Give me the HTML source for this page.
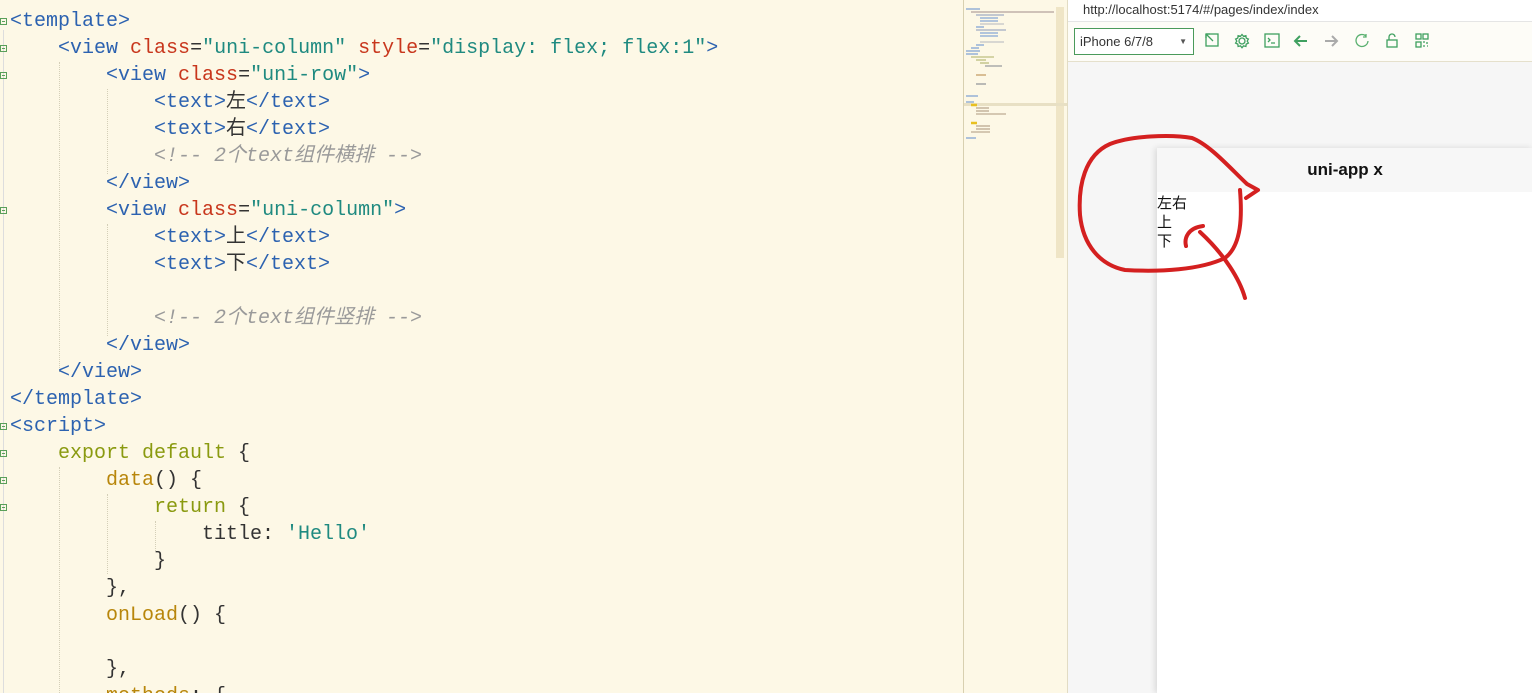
<!DOCTYPE html>
<html><head><meta charset="utf-8"><style>
*{margin:0;padding:0;box-sizing:border-box}
html,body{width:1532px;height:693px;overflow:hidden}
body{position:relative;background:#fdf8e6;font-family:"Liberation Sans","Noto Sans CJK SC",sans-serif}
#code{position:absolute;left:0;top:0;width:963px;height:693px;background:#fdf8e6}
.ln{position:absolute;left:10px;height:27px;line-height:27px;font-family:"Liberation Mono","Noto Sans CJK SC",monospace;font-size:20px;white-space:pre;color:#333}
.t{color:#2c62b0}.a{color:#c8361c}.s{color:#1f8a80}.c{color:#9a9a9a;font-style:italic}.k{color:#8a9a10}.f{color:#b8860b}
.fold{position:absolute;left:0;width:7px;height:7px;border:1px solid #5aa05a;font-size:0}
.fold:after{content:"";position:absolute;left:1px;top:2px;width:3px;height:1px;background:#5aa05a}
.guide{position:absolute;border-left:1px dotted #d4cfb8;width:0}
#mini{position:absolute;left:963px;top:0;width:104px;height:693px;background:#fdf8e6;border-left:1px solid #d8d0b0}
#right{position:absolute;left:1067px;top:0;width:465px;height:693px;background:#f6f6f6;border-left:1px solid #e2dcc4}
</style></head><body>
<div id="code">
<div class="guide" style="left:59px;top:62px;height:310px"></div>
<div class="guide" style="left:107px;top:89px;height:85px"></div>
<div class="guide" style="left:107px;top:224px;height:112px"></div>
<div class="guide" style="left:59px;top:467px;height:226px"></div>
<div class="guide" style="left:107px;top:494px;height:80px"></div>
<div class="guide" style="left:155px;top:521px;height:30px"></div>
<div style="position:absolute;left:3px;top:30px;height:663px;border-left:1px solid #ddd"></div>
<div class="fold" style="top:18px"></div><div class="fold" style="top:45px"></div><div class="fold" style="top:72px"></div><div class="fold" style="top:207px"></div><div class="fold" style="top:423px"></div><div class="fold" style="top:450px"></div><div class="fold" style="top:477px"></div><div class="fold" style="top:504px"></div>
<div class="ln" style="top:8px"><span class="t">&lt;template&gt;</span></div>
<div class="ln" style="top:35px">    <span class="t">&lt;view</span> <span class="a">class</span>=<span class="s">"uni-column"</span> <span class="a">style</span>=<span class="s">"display: flex; flex:1"</span><span class="t">&gt;</span></div>
<div class="ln" style="top:62px">        <span class="t">&lt;view</span> <span class="a">class</span>=<span class="s">"uni-row"</span><span class="t">&gt;</span></div>
<div class="ln" style="top:89px">            <span class="t">&lt;text&gt;</span>左<span class="t">&lt;/text&gt;</span></div>
<div class="ln" style="top:116px">            <span class="t">&lt;text&gt;</span>右<span class="t">&lt;/text&gt;</span></div>
<div class="ln" style="top:143px">            <span class="c">&lt;!-- 2个text组件横排 --&gt;</span></div>
<div class="ln" style="top:170px">        <span class="t">&lt;/view&gt;</span></div>
<div class="ln" style="top:197px">        <span class="t">&lt;view</span> <span class="a">class</span>=<span class="s">"uni-column"</span><span class="t">&gt;</span></div>
<div class="ln" style="top:224px">            <span class="t">&lt;text&gt;</span>上<span class="t">&lt;/text&gt;</span></div>
<div class="ln" style="top:251px">            <span class="t">&lt;text&gt;</span>下<span class="t">&lt;/text&gt;</span></div>
<div class="ln" style="top:305px">            <span class="c">&lt;!-- 2个text组件竖排 --&gt;</span></div>
<div class="ln" style="top:332px">        <span class="t">&lt;/view&gt;</span></div>
<div class="ln" style="top:359px">    <span class="t">&lt;/view&gt;</span></div>
<div class="ln" style="top:386px"><span class="t">&lt;/template&gt;</span></div>
<div class="ln" style="top:413px"><span class="t">&lt;script&gt;</span></div>
<div class="ln" style="top:440px">    <span class="k">export default</span> {</div>
<div class="ln" style="top:467px">        <span class="f">data</span>() {</div>
<div class="ln" style="top:494px">            <span class="k">return</span> {</div>
<div class="ln" style="top:521px">                title: <span class="s">'Hello'</span></div>
<div class="ln" style="top:548px">            }</div>
<div class="ln" style="top:575px">        },</div>
<div class="ln" style="top:602px">        <span class="f">onLoad</span>() {</div>
<div class="ln" style="top:656px">        },</div>
<div class="ln" style="top:683px">        <span class="f">methods</span>: {</div>
</div>
<div id="mini">
<div style="position:absolute;left:92px;top:7px;width:8px;height:251px;background:#efe5c6"></div>
<div style="position:absolute;left:0;top:103px;width:104px;height:3px;background:#e8e0c4"></div>
<svg width="104" height="150" style="position:absolute;left:0;top:0">
<g stroke-width="1.6">
<line x1="2" y1="9" x2="16" y2="9" stroke="#9ab4d8"/><line x1="7" y1="12" x2="90" y2="12" stroke="#c0b0a8"/><line x1="12" y1="15" x2="40" y2="15" stroke="#b0b8c8"/><line x1="16" y1="18" x2="34" y2="18" stroke="#9ab4d8"/><line x1="16" y1="21" x2="34" y2="21" stroke="#9ab4d8"/><line x1="16" y1="24" x2="40" y2="24" stroke="#ccc"/><line x1="12" y1="27" x2="20" y2="27" stroke="#9ab4d8"/><line x1="12" y1="30" x2="42" y2="30" stroke="#b0b8c8"/><line x1="16" y1="33" x2="34" y2="33" stroke="#9ab4d8"/><line x1="16" y1="36" x2="34" y2="36" stroke="#9ab4d8"/><line x1="16" y1="42" x2="40" y2="42" stroke="#ccc"/><line x1="12" y1="45" x2="20" y2="45" stroke="#9ab4d8"/><line x1="7" y1="48" x2="15" y2="48" stroke="#9ab4d8"/><line x1="2" y1="51" x2="16" y2="51" stroke="#9ab4d8"/><line x1="2" y1="54" x2="14" y2="54" stroke="#9ab4d8"/><line x1="7" y1="57" x2="30" y2="57" stroke="#c8c890"/><line x1="12" y1="60" x2="22" y2="60" stroke="#c8c890"/><line x1="16" y1="63" x2="25" y2="63" stroke="#c8c890"/><line x1="21" y1="66" x2="38" y2="66" stroke="#aaa"/><line x1="12" y1="75" x2="22" y2="75" stroke="#d0b080"/><line x1="12" y1="84" x2="22" y2="84" stroke="#aaa"/><line x1="2" y1="96" x2="14" y2="96" stroke="#9ab4d8"/><line x1="2" y1="102" x2="10" y2="102" stroke="#9ab4d8"/><line x1="7" y1="105" x2="13" y2="105" stroke="#e8c020" stroke-width="2.5"/><line x1="12" y1="108" x2="25" y2="108" stroke="#c8b8a0"/><line x1="12" y1="111" x2="25" y2="111" stroke="#c8b8a0"/><line x1="12" y1="114" x2="42" y2="114" stroke="#c8b8a0"/><line x1="7" y1="123" x2="13" y2="123" stroke="#e8c020" stroke-width="2.5"/><line x1="12" y1="126" x2="26" y2="126" stroke="#c8b8a0"/><line x1="12" y1="129" x2="26" y2="129" stroke="#c8b8a0"/><line x1="7" y1="132" x2="26" y2="132" stroke="#c8b8a0"/><line x1="2" y1="138" x2="12" y2="138" stroke="#9ab4d8"/>
</g></svg>
</div>
<div id="right">
<div style="position:absolute;left:0;top:0;width:465px;height:22px;background:#fff;border-bottom:1px solid #e5e5e5;font-size:13px;color:#333;line-height:20px;padding-left:15px">http://localhost:5174/#/pages/index/index</div>
<div style="position:absolute;left:0;top:22px;width:465px;height:40px;background:#fdfcf7;border-bottom:1px solid #e5e0cc"></div>
<div style="position:absolute;left:6px;top:28px;width:120px;height:27px;border:1px solid #4a9a5a;background:#fff;font-size:13px;color:#333;line-height:25px;padding-left:5px">iPhone 6/7/8<span style="position:absolute;right:6px;top:0;font-size:8px;color:#555">▼</span></div>
<svg width="260" height="20" style="position:absolute;left:134px;top:31px" fill="none" stroke="#3fa060" stroke-width="1.3">
<rect x="4" y="3" width="12" height="12"/><path d="M4 3 L11 10 M4 3 h4 M4 3 v4"/>
<circle cx="40" cy="10" r="3"/><path d="M40 3.5 l1.5 1.8 2.4-.6 .3 2.4 2.2 1 -1.2 2 1.2 2 -2.2 1 -.3 2.4 -2.4-.6 -1.5 1.8 -1.5-1.8 -2.4 .6 -.3-2.4 -2.2-1 1.2-2 -1.2-2 2.2-1 .3-2.4 2.4 .6z"/>
<rect x="63" y="3" width="14" height="13"/><path d="M66 7 l2 2 -2 2 M69 12 h4"/>
<path d="M93 10 h12 M98 5 l-5 5 5 5" stroke-width="2"/>
<path d="M123 10 h12 M130 5 l5 5 -5 5" stroke="#aaa" stroke-width="2"/>
<path d="M164 5 A6 6 0 1 0 166 10 M164 3 v3 h-3" stroke="#5ab070"/>
<rect x="185" y="9" width="10" height="7"/><path d="M187 9 v-3 a3 3 0 0 1 6 0"/>
<rect x="214" y="3" width="5" height="5"/><rect x="221" y="3" width="5" height="5"/><rect x="214" y="11" width="5" height="5"/><path d="M221 11 h2 M225 11 v2 M221 15 h2 M225 15 h1"/>
</svg>
<div style="position:absolute;left:89px;top:148px;width:376px;height:545px;background:#fff;box-shadow:-2px 0 6px rgba(0,0,0,.12)"></div>
<div style="position:absolute;left:89px;top:148px;width:376px;height:44px;background:#f7f7f7;font-weight:bold;font-size:17px;text-align:center;line-height:44px;color:#111">uni-app x</div>
<div style="position:absolute;left:89px;top:194px;font-size:15px;line-height:19px;color:#111">左右<br>上<br>下</div>
</div>
<svg width="1532" height="693" style="position:absolute;left:0;top:0" fill="none" stroke="#d42020" stroke-width="4" stroke-linecap="round" stroke-linejoin="round">
<path d="M1246 198 L1258 190 L1247 184 C1230 168 1210 145 1192 138 C1170 134 1130 136 1110 144 C1085 155 1078 185 1080 215 C1083 245 1100 265 1125 270 C1160 272 1200 270 1225 258 C1242 245 1242 215 1240 190"/>
<path d="M1245 298 C1240 280 1225 255 1200 232 M1186 246 C1184 238 1188 228 1203 226"/>
</svg>
</body></html>
